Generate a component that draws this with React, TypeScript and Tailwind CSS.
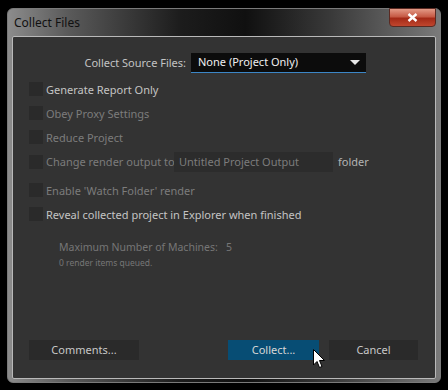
import React from "react";

const font = { fontFamily: '"Noto Sans", "Open Sans", sans-serif' };

function Check({ label, enabled }: { label: string; enabled?: boolean }) {
  return (
    <div className="flex items-center h-[14px]">
      <div className="w-[14px] h-[14px] bg-[#2a2a2a] shrink-0" />
      <span className={`ml-[3px] text-[11px] leading-none whitespace-nowrap ${enabled ? "text-[#c4c4c4]" : "text-[#7c7c7c]"}`}>{label}</span>
    </div>
  );
}

function Btn({ label, w, primary }: { label: string; w: string; primary?: boolean }) {
  return (
    <div className={`${w} h-[20px] flex items-center justify-center text-[11px] ${primary ? "bg-[#074d74] text-[#d6d6d6]" : "bg-[#2a2a2a] text-[#c8c8c8]"}`}>
      {label}
    </div>
  );
}

export default function App() {
  return (
    <div className="w-[448px] h-[390px] bg-black pt-[8px] pl-[7px] relative" style={font}>
      <div className="w-[434px] h-[375px] rounded-[6px] border border-[#7a7a7a] bg-[linear-gradient(90deg,#8c8c8c_0%,#5a5a5a_14%,#1c1c1c_40%,#101010_55%,#3a3a3a_75%,#7a7a7a_100%)] flex flex-col px-[4px] pb-[3px]">
        <div className="h-[27px] flex items-start justify-between shrink-0">
          <span className="text-[12px] text-[#111] mt-[5px] ml-[2px]">Collect Files</span>
          <div className="w-[47px] h-[19px] mt-[-1px] rounded-b-[4px] border border-[#5a2a22] bg-[linear-gradient(180deg,#e39a86_0%,#c65a45_45%,#a42a17_55%,#c0462e_100%)] flex items-center justify-center">
            <svg width="11" height="9" viewBox="0 0 11 9">
              <path d="M1.5 1 L9.5 8 M9.5 1 L1.5 8" stroke="#fff" strokeWidth="2.4" />
            </svg>
          </div>
        </div>
        <div className="flex-1 border border-[#b9b9b9] rounded-[2px] bg-[#333333] flex flex-col pl-[16px] pr-[17px] pb-[18px]">
          <div className="flex items-center mt-[16px] h-[20px]">
            <span className="w-[157px] text-right text-[11px] text-[#c4c4c4] whitespace-nowrap">Collect Source Files:</span>
            <div className="ml-[5px] w-[175px] h-[20px] bg-[#0c0c0c] border-b border-[#3c86c6] flex items-center justify-between pl-[7px] pr-[6px]">
              <span className="text-[11px] text-[#f0f0f0]">None (Project Only)</span>
              <svg width="10" height="6" viewBox="0 0 10 6">
                <path d="M0 0 H10 L5 5 Z" fill="#e8e8e8" />
              </svg>
            </div>
          </div>
          <div className="flex flex-col mt-[9px] gap-[10px]">
            <Check label="Generate Report Only" enabled />
            <Check label="Obey Proxy Settings" />
            <Check label="Reduce Project" />
          </div>
          <div className="flex items-center mt-[8px] h-[20px]">
            <div className="w-[14px] h-[14px] bg-[#2a2a2a] shrink-0" />
            <span className="ml-[3px] w-[128px] shrink-0 whitespace-nowrap text-[11px] text-[#7c7c7c]">Change render output to</span>
            <div className="w-[159px] shrink-0 h-[20px] bg-[#2c2c2c] flex items-center pl-[5px]">
              <span className="text-[11px] text-[#7c7c7c] whitespace-nowrap">Untitled Project Output</span>
            </div>
            <span className="ml-[5px] text-[11px] text-[#b4b4b4]">folder</span>
          </div>
          <div className="flex flex-col mt-[11px] gap-[10px]">
            <Check label="Enable 'Watch Folder' render" />
            <Check label="Reveal collected project in Explorer when finished" enabled />
          </div>
          <div className="ml-[30px] mt-[21px] text-[10.5px] text-[#767676] leading-none">Maximum Number of Machines:&nbsp;&nbsp; 5</div>
          <div className="ml-[30px] mt-[6px] text-[8.5px] text-[#767676] leading-none">0 render items queued.</div>
          <div className="flex-1" />
          <div className="flex items-center">
            <Btn label="Comments..." w="w-[110px]" />
            <div className="flex-1" />
            <Btn label="Collect..." w="w-[91px]" primary />
            <div className="w-[10px]" />
            <Btn label="Cancel" w="w-[89px]" />
          </div>
        </div>
      </div>
      <svg className="absolute left-[313px] top-[349px]" width="13" height="20" viewBox="0 0 13 20">
        <path d="M0.5 0.5 V16 L4 12.5 L6.5 18.5 L9 17.5 L6.5 11.5 H11.5 Z" fill="#fff" stroke="#000" strokeWidth="1" />
      </svg>
    </div>
  );
}
